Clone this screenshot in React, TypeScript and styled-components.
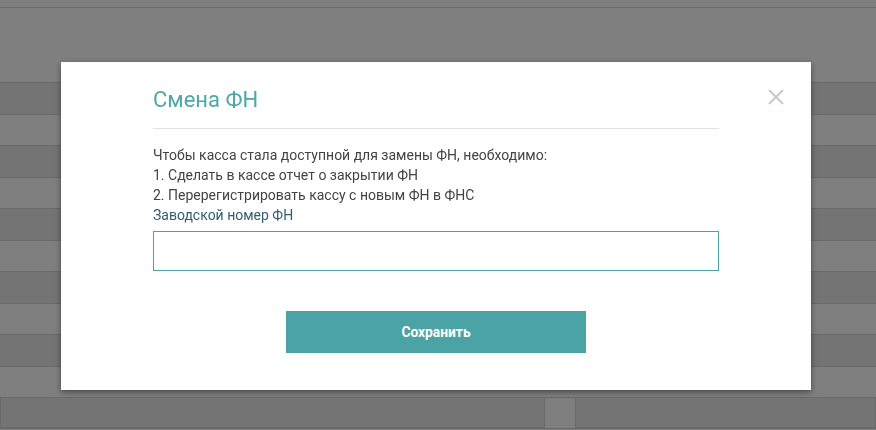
import React from 'react';
import styled, { createGlobalStyle } from 'styled-components';

const GlobalStyle = createGlobalStyle`
  html, body {
    margin: 0;
    padding: 0;
    background: #ffffff;
    font-family: Roboto, "Noto Sans", sans-serif;
  }
`;

const Page = styled.div`
  width: 876px;
  height: 430px;
  overflow: hidden;
  background: #ffffff;
`;

const TopBar = styled.div`
  height: 7px;
  border-bottom: 1px solid #d6d6d6;
  background: #fefefe;
`;

const Header = styled.div`
  height: 74px;
  background: #ffffff;
`;

const Row = styled.div<{ $odd: boolean }>`
  height: 31.5px;
  box-sizing: border-box;
  border-top: 1px solid #d4d4d4;
  background: ${(p) => (p.$odd ? '#e8e8e8' : '#fefefe')};
`;

const FooterRow = styled.div`
  height: 31.5px;
  box-sizing: border-box;
  border-top: 1px solid #d4d4d4;
  border-bottom: 1px solid #d4d4d4;
  display: flex;
  gap: 30px;
  background: #fefefe;
`;

const FooterCell = styled.div<{ $grow?: boolean }>`
  flex: ${(p) => (p.$grow ? '1' : '0 0 545px')};
  box-sizing: border-box;
  border: 1px solid #d4d4d4;
  border-top: none;
  background: #e8e8e8;
`;

const Overlay = styled.div`
  position: fixed;
  inset: 0;
  background: rgba(0, 0, 0, 0.5);
  padding: 62px 0 0 61px;
  box-sizing: border-box;
`;

const Modal = styled.div`
  position: relative;
  width: 750px;
  height: 328px;
  box-sizing: border-box;
  background: #ffffff;
  box-shadow: 0 2px 6px rgba(0, 0, 0, 0.45);
  padding: 23px 92px 38px;
  display: flex;
  flex-direction: column;
`;

const CloseButton = styled.button`
  position: absolute;
  top: 26px;
  right: 26px;
  width: 18px;
  height: 18px;
  padding: 0;
  border: none;
  background: none;
  cursor: pointer;
  display: flex;
  align-items: center;
  justify-content: center;
`;

const Title = styled.h2`
  margin: 0;
  padding-bottom: 13px;
  border-bottom: 1px solid #e3e3e3;
  font-size: 22px;
  line-height: 30px;
  font-weight: 400;
  color: #4ea6a9;
`;

const Body = styled.div`
  margin-top: 16px;
  font-size: 14px;
  line-height: 20px;
  color: #444444;
`;

const Line = styled.div``;

const Label = styled.label`
  display: block;
  color: #335f6d;
`;

const Input = styled.input`
  display: block;
  margin-top: 6px;
  width: 100%;
  height: 40px;
  box-sizing: border-box;
  border: 1px solid #4ba3a6;
  padding: 0 12px;
  font-family: inherit;
  font-size: 14px;
  color: #333333;
  caret-color: #222222;
  outline: none;
`;

const Actions = styled.div`
  margin-top: 40px;
  display: flex;
  justify-content: center;
`;

const SaveButton = styled.button`
  width: 300px;
  height: 42px;
  border: none;
  background: #4ba3a6;
  color: #ffffff;
  font-family: Roboto, "Noto Sans", sans-serif;
  font-size: 13.8px;
  font-weight: 700;
  cursor: pointer;
`;

function App() {
  const rows = Array.from({ length: 10 }, (_, i) => i);
  return (
    <>
      <GlobalStyle />
      <Page>
        <TopBar />
        <Header />
        {rows.map((i) => (
          <Row key={i} $odd={i % 2 === 0} />
        ))}
        <FooterRow>
          <FooterCell />
          <FooterCell $grow />
        </FooterRow>
      </Page>
      <Overlay>
        <Modal>
          <CloseButton aria-label="Закрыть">
            <svg width="16" height="16" viewBox="0 0 16 16">
              <path d="M1 1 L15 15 M15 1 L1 15" stroke="#c9c9c9" strokeWidth="2" />
            </svg>
          </CloseButton>
          <Title>Смена ФН</Title>
          <Body>
            <Line>Чтобы касса стала доступной для замены ФН, необходимо:</Line>
            <Line>1. Сделать в кассе отчет о закрытии ФН</Line>
            <Line>2. Перерегистрировать кассу с новым ФН в ФНС</Line>
            <Label htmlFor="fn-number">Заводской номер ФН</Label>
            <Input id="fn-number" autoFocus />
          </Body>
          <Actions>
            <SaveButton>Сохранить</SaveButton>
          </Actions>
        </Modal>
      </Overlay>
    </>
  );
}

export default App;
